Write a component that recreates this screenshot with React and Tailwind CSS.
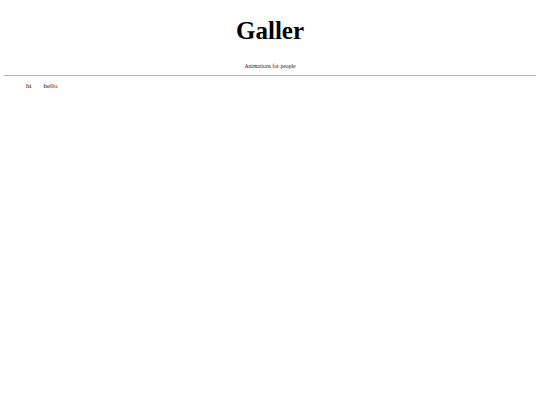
import React from 'react';

const links = ['hi', 'hello'];

export default function App() {
  return (
    <div className="min-h-[405px] bg-white text-black" style={{ fontFamily: '"Liberation Serif", serif' }}>
      {/* Header */}
      <header className="flex flex-col items-center pt-[18px]">
        <h1 className="text-[25px] font-bold leading-[25px]">Galler</h1>
        <p className="mt-[20px] text-[5.7px] leading-[6px] text-[#222]">Animations for people</p>
      </header>

      <hr className="mx-[4px] mt-[6px] border-0 border-t border-[#b5b5b5]" />

      {/* Nav */}
      <ul className="flex gap-[12px] pl-[26px] pt-[6px] text-[7px] leading-[8px] text-[#222]">
        {links.map((l) => (
          <li key={l}>{l}</li>
        ))}
      </ul>
    </div>
  );
}
